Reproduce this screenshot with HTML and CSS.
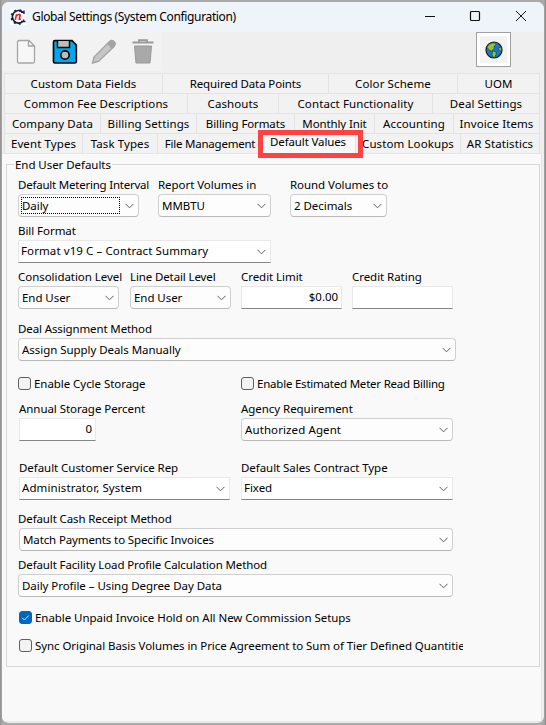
FILE: index.html
```html
<!DOCTYPE html>
<html lang="en">
<head>
<meta charset="utf-8">
<title>Global Settings (System Configuration)</title>
<link rel="stylesheet" href="styles.css">
</head>
<body>
<svg class="defs" width="0" height="0"><symbol id="chev" viewBox="0 0 9 6"><path d="M.5 .8 4.5 4.8 8.5 .8" fill="none" stroke="#5c5c5c" stroke-width="1"/></symbol></svg>
<div class="window">
  <header class="titlebar">
    <svg class="logo" width="16" height="16" viewBox="0 0 16 16"><rect width="16" height="16" fill="#fff"/><path d="M12.500 2.800A6.300 6.300 0 1 0 12.500 12.800" fill="none" stroke="#14213d" stroke-width="1.700"/><path d="M11 1.900A6.600 6.600 0 1 0 11 14" fill="none" stroke="#14213d" stroke-width="2.600" stroke-dasharray="1.800 2.900"/><path d="M11 3.200h3.500M14 1.500v3.500M11 12.500h4.500M13.600 10.500v2" fill="none" stroke="#14213d" stroke-width="1.400"/><path d="M5.300 10.900 6.600 5.300M6.500 6.700Q10.400 4 10.100 6.500L9.300 10.200h1.500" fill="none" stroke="#e8202c" stroke-width="1.600"/></svg>
    <span class="title">Global Settings (System Configuration)</span>
    <svg class="controls" width="102" height="12" viewBox="0 0 102 12" fill="none" stroke="#111"><path d="M0 6.500h10" stroke-width="1.200"/><rect x="45.500" y="1.500" width="9" height="9" rx="1" stroke-width="1.200"/><path d="M91 1l10 10M101 1 91 11"/></svg>
  </header>
  <div class="toolbar">
    <div class="tools">
      <svg width="20" height="26" viewBox="0 0 20 26"><path d="M1.500 3q0-1.500 1.500-1.500h10L18.500 7v15.500q0 1.500-1.500 1.500H3q-1.500 0-1.500-1.500zM12.500 1.500v5.500h6" fill="#f7f7f7" stroke="#a5a5a5" stroke-width="1.300"/></svg>
      <svg width="26" height="26" viewBox="0 0 26 26"><path d="M3 1.700h17l4.300 4.300v16.500q0 1.500-1.500 1.500H3q-1.500 0-1.500-1.500V3.200q0-1.500 1.500-1.500z" fill="#00a8f0" stroke="#080808" stroke-width="1.700"/><path d="M5.500 2v6.500h12V2" fill="#bdbdbd" stroke="#080808" stroke-width="1.500"/><circle cx="13" cy="16" r="4.200" fill="#bdbdbd" stroke="#080808" stroke-width="1.700"/></svg>
      <svg width="26" height="26" viewBox="0 0 26 26"><path d="M1.500 24 3 18 18.500 2.500q2-2 4.500 0t0 5L7.500 22.500z" fill="#c6c6c6" stroke="#a3a3a3" stroke-width="1.300"/><path d="M16.500 4.500 18.500 2.500q2-2 4.500 0t0 5l-2 2z" fill="#a3a3a3" stroke="#a3a3a3"/></svg>
      <svg width="22" height="26" viewBox="0 0 22 26"><path d="M.5 3.500h21M7 3V1.200h8V3" fill="none" stroke="#999" stroke-width="1.800"/><path d="M2.500 7h17L18 24H4z" fill="#a9a9a9" stroke="#999"/></svg>
    </div>
    <button class="globe"><svg width="18" height="18" viewBox="0 0 18 18"><circle cx="9" cy="9" r="8" fill="#1977c8" stroke="#151515" stroke-width="1.200"/><path d="M2 6.500Q3.500 1.800 9.500 1.800L11 3.800 9 5.500 9.200 7.500 6.500 10 4.500 9.200zM7.500 10l3.800 1-.5 3L9 17 7 14zM13.500 6.800l2.700-.8.500 4-2.500-.5z" fill="#8cc63e" stroke="#152c18" stroke-width=".5"/></svg></button>
  </div>
  <nav class="tabs">
    <div class="tabrow r1"><span>Custom Data Fields</span><span class="tight">Required Data Points</span><span>Color Scheme</span><span>UOM</span></div>
    <div class="tabrow r2"><span>Common Fee Descriptions</span><span>Cashouts</span><span>Contact Functionality</span><span>Deal Settings</span></div>
    <div class="tabrow r3"><span>Company Data</span><span>Billing Settings</span><span class="tight">Billing Formats</span><span class="tight">Monthly Init</span><span>Accounting</span><span>Invoice Items</span></div>
    <div class="tabrow r4"><span>Event Types</span><span>Task Types</span><span class="tighter">File Management</span><span class="active tight">Default Values</span><span>Custom Lookups</span><span>AR Statistics</span><i class="highlight"></i></div>
  </nav>
  <main class="panel">
    <fieldset class="group">
      <legend>End User Defaults</legend>
      <div class="row row-report">
        <div class="field"><label class="tighter">Default Metering Interval</label><div class="box combo"><span class="focus">Daily</span><svg><use href="#chev"/></svg></div></div>
        <div class="field"><label>Report Volumes in</label><div class="box combo"><span>MMBTU</span><svg><use href="#chev"/></svg></div></div>
        <div class="field"><label>Round Volumes to</label><div class="box combo"><span>2 Decimals</span><svg><use href="#chev"/></svg></div></div>
      </div>
      <div class="row row-format">
        <div class="field"><label>Bill Format</label><div class="box edit"><span class="loose">Format v19 C – Contract Summary</span><svg><use href="#chev"/></svg></div></div>
      </div>
      <div class="row row-levels">
        <div class="field"><label>Consolidation Level</label><div class="box combo"><span>End User</span><svg><use href="#chev"/></svg></div></div>
        <div class="field"><label class="tight">Line Detail Level</label><div class="box combo"><span>End User</span><svg><use href="#chev"/></svg></div></div>
        <div class="field"><label>Credit Limit</label><div class="box edit num"><span>$0.00</span></div></div>
        <div class="field"><label>Credit Rating</label><div class="box edit"></div></div>
      </div>
      <div class="row row-deal">
        <div class="field"><label class="tight">Deal Assignment Method</label><div class="box combo"><span>Assign Supply Deals Manually</span><svg><use href="#chev"/></svg></div></div>
      </div>
      <div class="row row-checks">
        <div class="check"><i></i><span>Enable Cycle Storage</span></div>
        <div class="check"><i></i><span class="tighter">Enable Estimated Meter Read Billing</span></div>
      </div>
      <div class="row row-storage">
        <div class="field"><label>Annual Storage Percent</label><div class="box edit num percent"><span>0</span></div></div>
        <div class="field"><label>Agency Requirement</label><div class="box combo"><span class="loose">Authorized Agent</span><svg><use href="#chev"/></svg></div></div>
      </div>
      <div class="row row-rep">
        <div class="field"><label>Default Customer Service Rep</label><div class="box edit"><span class="loose">Administrator, System</span><svg><use href="#chev"/></svg></div></div>
        <div class="field"><label>Default Sales Contract Type</label><div class="box edit"><span>Fixed</span><svg><use href="#chev"/></svg></div></div>
      </div>
      <div class="row row-cash">
        <div class="field"><label class="tight">Default Cash Receipt Method</label><div class="box combo inset"><span class="tight">Match Payments to Specific Invoices</span><svg><use href="#chev"/></svg></div></div>
      </div>
      <div class="row row-profile">
        <div class="field"><label class="tight">Default Facility Load Profile Calculation Method</label><div class="box combo"><span>Daily Profile – Using Degree Day Data</span><svg><use href="#chev"/></svg></div></div>
      </div>
      <div class="row row-hold"><div class="check on"><i><svg width="13" height="13" viewBox="0 0 13 13"><path d="M3.200 6.800 5.400 9 9.800 4.500" fill="none" stroke="#d7eaff"/></svg></i><span>Enable Unpaid Invoice Hold on All New Commission Setups</span></div></div>
      <div class="row row-sync"><div class="check"><i></i><span>Sync Original Basis Volumes in Price Agreement to Sum of Tier Defined Quantities</span></div></div>
    </fieldset>
  </main>
</div>
</body>
</html>
```
FILE: styles.css
```css
* { box-sizing: border-box; }
body { margin: 0; width: 546px; height: 725px; padding: 2px 2px; background: linear-gradient(90deg, #8f8f8f, #aaa 2px, #aaa 544px, #888); font: 11.5px/17px "Noto Sans", sans-serif; letter-spacing: -.05px; color: #000; overflow: hidden; }
.defs { position: absolute; }
.loose { letter-spacing: .1px; }
.tight { letter-spacing: -.12px; }
.tighter { letter-spacing: -.22px; }
.window { height: 721px; background: #efefef; border-radius: 7px; overflow: hidden; }
.titlebar { height: 30px; background: #eff3fa; display: flex; align-items: center; padding: 0 17px 2px 8px; }
.logo { flex: none; margin-top: 1px; }
.title { margin-left: 6px; font-size: 12px; letter-spacing: -.35px; flex: 1; white-space: nowrap; }
.controls { flex: none; }
.toolbar { height: 41px; display: flex; justify-content: space-between; padding-right: 33px; }
.tools { width: 160px; height: 39px; background: #f2f2f2; display: flex; padding: 7px 0 0 14px; }
.tools svg + svg { margin-left: 16px; }
.tools svg:nth-child(3) { margin-left: 13px; }
.tools svg:nth-child(4) { margin-left: 15px; }
.globe { width: 35px; height: 35px; border: 1px solid #a0a0a0; background: #f3f3f3; box-shadow: inset 0 0 0 3px #fff; padding: 0; display: flex; align-items: center; justify-content: center; }
.tabs { margin: 0 4px 0 2px; letter-spacing: .1px; }
.tabrow { position: relative; display: grid; height: 20px; background: #f2f2f2; border-left: 1px solid #e3e3e3; }
.tabrow span { border-top: 1px solid #e3e3e3; border-right: 1px solid #e3e3e3; text-align: center; line-height: 20px; white-space: nowrap; }
.r1 { grid-template-columns: 158px 166px 129px 1fr; }
.r2 { grid-template-columns: 183px 91px 154px 1fr; }
.r3 { grid-template-columns: 96px 96px 98px 80px 79px 1fr; }
.r4 { grid-template-columns: 78px 75px 102px 96px 105px 1fr; }
.tabrow .active { margin-top: -2px; background: #f9f9f9; line-height: 20px; padding-left: 1px; }
.r4 span:nth-child(3) { padding-left: 3px; }
.highlight { position: absolute; left: 253px; top: -3px; width: 105px; height: 28px; border: 5px solid #ff4343; }
.panel { height: 569px; margin-right: 2px; background: #f9f9f9; border: 1px solid #e6e6e6; border-width: 1px 1px 1px 0; padding: 2px 1px 0 4px; }
.group { margin: 0; min-width: 0; height: 511px; border: 1px solid #d8d8d8; padding: 4px 0 0 11px; }
.group legend { margin-left: -4px; padding: 0 1px; height: 17px; }
.row { display: grid; height: 40px; margin-top: 6px; }
.row label { display: block; height: 17px; line-height: 15px; white-space: nowrap; }
.row-report { grid-template-columns: 121px 113px 97px; column-gap: 19px; margin-top: 0; }
.row-format { grid-template-columns: 253px; }
.row-levels { grid-template-columns: 112px 111px 111px 101px; }
.row-levels .box { width: 101px; }
.row-deal { grid-template-columns: 438px; margin-top: 12px; }
.row-checks { grid-template-columns: 223px 212px; height: 13px; margin-top: 16px; }
.row-storage { grid-template-columns: 211px 212px; column-gap: 11px; margin: 11px 0 0 1px; }
.row-rep { grid-template-columns: 211px 212px; column-gap: 11px; margin: 19px 0 0 1px; }
.row-cash { grid-template-columns: 435px; margin-top: 11px; }
.row-profile { grid-template-columns: 435px; }
.row-hold { height: 13px; margin: 14px 0 0 1px; }
.row-sync { height: 17px; margin: 13px 0 0 1px; width: 444px; grid-template-columns: 444px; }
.box { height: 23px; display: flex; align-items: center; justify-content: space-between; border: 1px solid #cfcfcf; background: #fdfdfd; white-space: nowrap; }
.combo { border-radius: 4px; border-bottom-color: #b8b8b8; padding: 0 4px 0 3px; }
.edit { background: #fff; border-color: #e8e8e8; border-bottom-color: #858585; padding: 0 4px 2px 2px; }
.num { justify-content: flex-end; padding-right: 3px; }
.percent { width: 77px; }
.inset { margin-left: 1px; }
.box svg { width: 9px; height: 6px; flex: none; margin-top: 1px; }
.edit svg { margin-top: 3px; }
.focus { width: 99px; height: 17px; margin-left: -1px; outline: 1px dotted #000; outline-offset: -1px; padding-left: 1px; }
.check { display: flex; align-items: center; height: 13px; white-space: nowrap; }
.check i { width: 13px; height: 13px; flex: none; border: 1px solid #5f5f5f; border-radius: 3px; background: #f3f3f3; margin-right: 3px; }
.check.on i { background: #0067c0; border-color: #0067c0; }
.check.on svg { display: block; margin: -1px; }
.check span { line-height: 17px; }
.row-sync .check { height: 17px; }
.row-sync span { overflow: hidden; letter-spacing: -.07px; }
```
